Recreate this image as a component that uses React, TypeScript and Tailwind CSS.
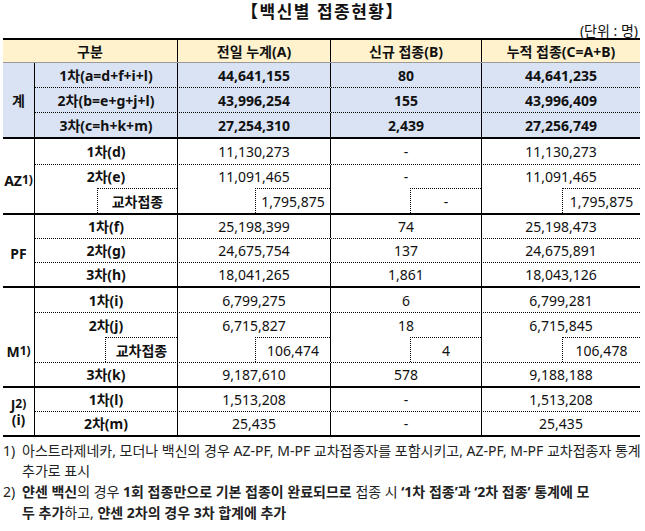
import React from "react";

// 백신별 접종현황 표
const dot = "border-t border-dotted border-black";

type RowProps = {
  name: React.ReactNode;
  a: string;
  b: string;
  c: string;
  h?: string;
  top?: boolean;
  bold?: boolean;
};

function Row({ name, a, b, c, h = "h-[25px]", top = true, bold = false }: RowProps) {
  return (
    <div className={`flex ${h} ${top ? dot : ""} ${bold ? "font-bold" : ""}`}>
      <div className="w-[143px] border-r border-black flex items-center justify-center font-bold">{name}</div>
      <div className="w-[153px] border-r border-black flex items-center justify-center">{a}</div>
      <div className="w-[151px] border-r border-black flex items-center justify-center">{b}</div>
      <div className="flex-1 flex items-center justify-center">{c}</div>
    </div>
  );
}

// 교차접종 row: every cell is split, the right part has dotted top/left borders
function CrossRow({ pad, a, b, c }: { pad: string; a: string; b: string; c: string }) {
  const sub = "flex-1 border-l border-t border-dotted border-black flex items-center justify-center";
  return (
    <div className="flex h-[25px]">
      <div className="w-[143px] border-r border-black flex">
        <div className={pad}></div>
        <div className={`${sub} font-bold`}>교차접종</div>
      </div>
      <div className="w-[153px] border-r border-black flex">
        <div className="w-[77px]"></div>
        <div className={sub}>{a}</div>
      </div>
      <div className="w-[151px] border-r border-black flex">
        <div className="w-[79px]"></div>
        <div className={sub}>{b}</div>
      </div>
      <div className="flex-1 flex">
        <div className="w-[80px]"></div>
        <div className={sub}>{c}</div>
      </div>
    </div>
  );
}

function Section({ label, children, bg = "", lpad = "" }: { label: React.ReactNode; children: React.ReactNode; bg?: string; lpad?: string }) {
  return (
    <div className={`flex border-b-2 border-black ${bg}`}>
      <div className={`w-[32px] border-r border-black flex items-center justify-center font-bold ${lpad}`}>{label}</div>
      <div className="flex-1 flex flex-col">{children}</div>
    </div>
  );
}

function Sup({ t }: { t: string }) {
  return <sup className="text-[12px] leading-none relative -top-[2px]">{t}</sup>;
}

export default function App() {
  return (
    <div className="w-[645px] h-[531px] bg-white text-[#111] text-[14px] font-['Noto_Sans','Noto_Sans_CJK_KR',sans-serif] overflow-hidden">
      <div className="h-[22px] flex items-center justify-center font-bold text-[17px] tracking-[1.5px] pt-[2px]">【백신별 접종현황】</div>
      <div className="h-[16px] flex items-center justify-end pr-[7px]">(단위 : 명)</div>

      <div className="ml-[3px] w-[637px] border-t-2 border-black">
        {/* header */}
        <div className="flex h-[23px] bg-[#fff2cc] border-b border-[#9a9a9a] font-bold">
          <div className="w-[175px] border-r border-black flex items-center justify-center">구분</div>
          <div className="w-[153px] border-r border-black flex items-center justify-center">전일 누계(A)</div>
          <div className="w-[151px] border-r border-black flex items-center justify-center">신규 접종(B)</div>
          <div className="flex-1 flex items-center justify-center">누적 접종(C=A+B)</div>
        </div>

        <Section label="계" bg="bg-[#dae3f3]">
          <Row name="1차(a=d+f+i+l)" a="44,641,155" b="80" c="44,641,235" h="h-[24px]" top={false} bold />
          <Row name="2차(b=e+g+j+l)" a="43,996,254" b="155" c="43,996,409" bold />
          <Row name="3차(c=h+k+m)" a="27,254,310" b="2,439" c="27,256,749" bold />
        </Section>

        <Section label={<span>AZ<Sup t="1)" /></span>} lpad="pt-[8px]">
          <Row name="1차(d)" a="11,130,273" b="-" c="11,130,273" top={false} />
          <Row name="2차(e)" a="11,091,465" b="-" c="11,091,465" h="h-[24px]" />
          <CrossRow pad="w-[62px]" a="1,795,875" b="-" c="1,795,875" />
        </Section>

        <Section label="PF" lpad="pt-[6px]">
          <Row name="1차(f)" a="25,198,399" b="74" c="25,198,473" h="h-[23px]" top={false} />
          <Row name="2차(g)" a="24,675,754" b="137" c="24,675,891" h="h-[24px]" />
          <Row name="3차(h)" a="18,041,265" b="1,861" c="18,043,126" h="h-[24px]" />
        </Section>

        <Section label={<span>M<Sup t="1)" /></span>} lpad="pt-[28px]">
          <Row name="1차(i)" a="6,799,275" b="6" c="6,799,281" h="h-[24px]" top={false} />
          <Row name="2차(j)" a="6,715,827" b="18" c="6,715,845" />
          <CrossRow pad="w-[70px]" a="106,474" b="4" c="106,478" />
          <Row name="3차(k)" a="9,187,610" b="578" c="9,188,188" h="h-[24px]" />
        </Section>

        <Section
          label={
            <div className="flex flex-col items-center leading-[15px]">
              <span>J<Sup t="2)" /></span>
              <span>(i)</span>
            </div>
          }
        >
          <Row name="1차(l)" a="1,513,208" b="-" c="1,513,208" h="h-[23px]" top={false} />
          <Row name="2차(m)" a="25,435" b="-" c="25,435" h="h-[24px]" />
        </Section>
      </div>

      {/* footnotes */}
      <div className="mt-[4px] pl-[3px] text-[#222] leading-[20px]">
        <div className="flex">
          <span className="w-[19px]">1)</span>
          <div className="whitespace-nowrap">
            아스트라제네카, 모더나 백신의 경우 AZ-PF, M-PF 교차접종자를 포함시키고, AZ-PF, M-PF 교차접종자 통계
            <br />
            추가로 표시
          </div>
        </div>
        <div className="flex leading-[21px]">
          <span className="w-[19px]">2)</span>
          <div className="whitespace-nowrap">
            <b>얀센 백신</b>의 경우 <b>1회 접종만으로 기본 접종이 완료되므로</b> 접종 시 <b>‘1차 접종’과 ‘2차 접종’ 통계에 모</b>
            <br />
            <b>두 추가</b>하고, <b>얀센 2차의 경우 3차 합계에 추가</b>
          </div>
        </div>
      </div>
    </div>
  );
}
